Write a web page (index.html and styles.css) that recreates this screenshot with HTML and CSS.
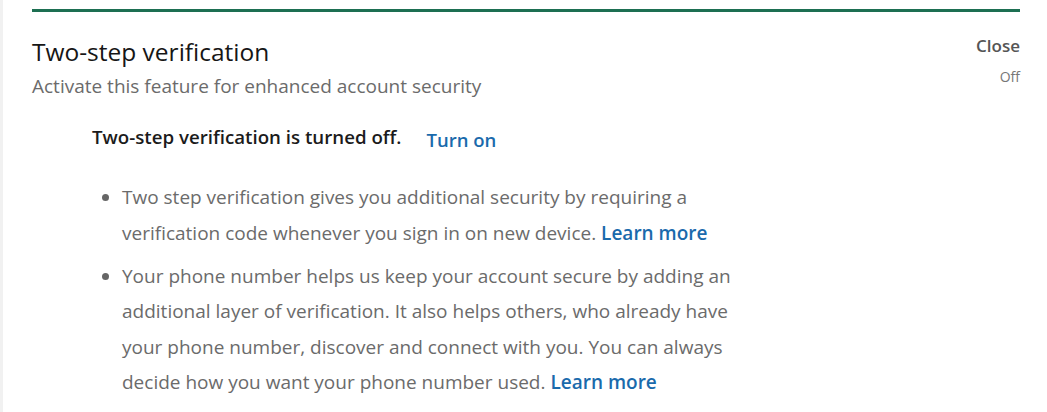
FILE: index.html
```html
<!DOCTYPE html>
<html lang="en">
<head>
    <meta charset="UTF-8">
    <title>Two-step verification</title>
    <link rel="stylesheet" href="styles.css">
</head>
<body>
  <div class="panel">
    <div class="topline"></div>
    <div class="header">
      <div class="heading">
        <h2>Two-step verification</h2>
        <p class="sub">Activate this feature for enhanced account security</p>
      </div>
      <div class="status">
        <a href="#" class="close">Close</a>
        <p class="off">Off</p>
      </div>
    </div>
    <div class="body">
      <div class="state">
        <p class="state-text">Two-step verification is turned off.</p>
        <a href="#" class="turn-on">Turn on</a>
      </div>
      <ul class="info">
        <li>Two step verification gives you additional security by requiring a verification code whenever you sign in on new device. <a href="#">Learn more</a></li>
        <li>Your phone number helps us keep your account secure by adding an additional layer of verification. It also helps others, who already have your phone number, discover and connect with you. You can always decide how you want your phone number used. <a href="#">Learn more</a></li>
      </ul>
    </div>
  </div>
</body>
</html>
```

FILE: styles.css
```css
*{
    margin: 0;
    padding: 0;
    box-sizing: border-box;
}
body{
    font-family: "Open Sans", "Noto Sans", sans-serif;
    background: #fff;
    border-left: 3px solid #f1f1f1;
    height: 100vh;
    overflow: hidden;
}
a{
    text-decoration: none;
}
.panel{
    padding: 9px 27px 0 29px;
}
.topline{
    height: 3px;
    background-color: #1d6f52;
}
.header{
    display: flex;
    justify-content: space-between;
    padding-top: 24px;
}
h2{
    font-size: 24.5px;
    font-weight: 400;
    color: #161616;
    line-height: 32px;
}
.sub{
    font-size: 19px;
    line-height: 26px;
    color: #6b6b6b;
    margin-top: 5px;
}
.status{
    text-align: right;
}
.close{
    display: block;
    font-size: 17px;
    line-height: 20px;
    font-weight: 600;
    color: #555;
}
.off{
    font-size: 14px;
    line-height: 20px;
    color: #777;
    margin-top: 11px;
}
.body{
    padding-left: 60px;
    padding-top: 25px;
}
.state{
    display: flex;
    align-items: flex-end;
    gap: 25px;
    line-height: 26px;
}
.state-text{
    font-size: 18.7px;
    font-weight: 600;
    color: #1b1b1b;
}
.turn-on{
    font-size: 18.5px;
    font-weight: 600;
    color: #1a6aac;
    position: relative;
    top: 3px;
}
.info{
    margin-top: 30px;
    padding-left: 30px;
    width: 680px;
    color: #6b6b6b;
    font-size: 19px;
    line-height: 35.5px;
}
.info li{
    margin-bottom: 7.5px;
}
.info li::marker{
    color: #666;
    font-size: 19px;
}
.info a{
    color: #1a6aac;
    font-weight: 600;
}
```
